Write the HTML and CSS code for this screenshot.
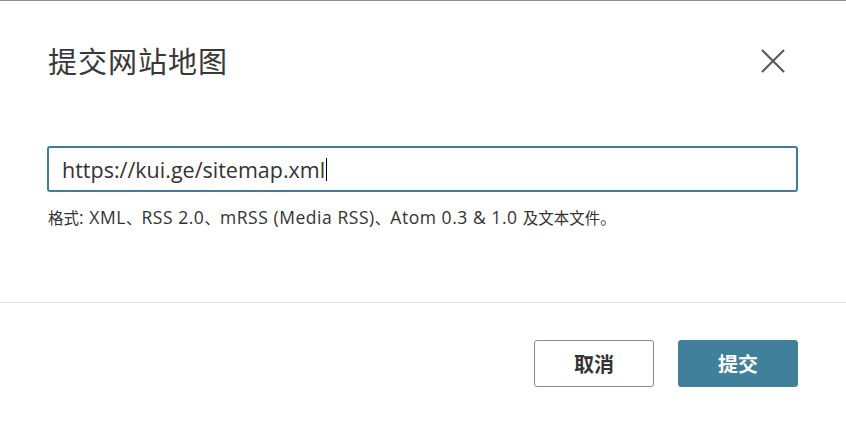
FILE: index.html
```html
<!DOCTYPE html>
<html lang="zh-CN">
<head>
<meta charset="utf-8">
<title>提交网站地图</title>
<link rel="stylesheet" href="styles.css">
</head>
<body>
<div class="dialog">
  <div class="header">
    <h1 class="title">提交网站地图</h1>
    <button class="close" aria-label="关闭">
      <svg width="26" height="26" viewBox="0 0 26 26"><path d="M2 2L24 24M24 2L2 24" stroke="#5a5a5a" stroke-width="2.2" fill="none"/></svg>
    </button>
  </div>
  <div class="body">
    <div class="field" role="textbox"><span class="value">https://kui.ge/sitemap.xml</span><span class="caret"></span></div>
    <p class="hint">格式<span class="latin">: XML</span>、<span class="latin">RSS 2.0</span>、<span class="latin">mRSS (Media RSS)</span>、<span class="latin">Atom 0.3 &amp; 1.0 </span>及文本文件。</p>
  </div>
  <div class="footer">
    <button class="btn btn-secondary">取消</button>
    <button class="btn btn-primary">提交</button>
  </div>
</div>
</body>
</html>
```
FILE: styles.css
```css
* { box-sizing: border-box; }
html, body { margin: 0; padding: 0; background: #fff; }
body {
  font-family: "Open Sans", "Noto Sans CJK SC", sans-serif;
  color: #333;
}
.dialog {
  width: 846px;
  height: 423px;
  border-top: 1px solid #8a8a8a;
  display: flex;
  flex-direction: column;
}
.header {
  height: 120px;
  display: flex;
  align-items: center;
  justify-content: space-between;
  padding: 0 60px 0 48px;
}
.title {
  margin: -3px 0 0;
  font-family: "Noto Sans CJK SC", sans-serif;
  font-weight: 400;
  font-size: 29px;
  letter-spacing: 1px;
  color: #383838;
}
.close {
  border: 0;
  background: none;
  padding: 0;
  width: 26px;
  height: 26px;
  display: flex;
}
.body {
  height: 181px;
  padding: 25px 48px 0 47px;
}
.field {
  height: 46px;
  border: 2px solid #3f7e99;
  border-radius: 3px;
  padding: 0 0 0 13px;
  display: flex;
  align-items: center;
  font-size: 21.5px;
  color: #333;
}
.caret {
  display: inline-block;
  width: 1px;
  height: 23px;
  background: #000;
  margin-left: 1px;
}
.hint {
  margin: 13px 0 0 1px;
  font-family: "Noto Sans CJK SC", sans-serif;
  font-size: 15.5px;
  color: #333;
}
.latin {
  font-family: "Open Sans", sans-serif;
  font-size: 17.5px;
  letter-spacing: 0.55px;
}
.footer {
  flex: 1;
  border-top: 1px solid #e2e2e2;
  display: flex;
  justify-content: flex-end;
  align-items: flex-start;
  gap: 24px;
  padding: 37px 48px 0 0;
}
.btn {
  width: 120px;
  height: 47px;
  border-radius: 3px;
  font-family: "Noto Sans CJK SC", sans-serif;
  font-size: 20px;
  font-weight: 700;
}
.btn-secondary {
  background: #fff;
  border: 1px solid #8a8a8a;
  color: #333;
}
.btn-primary {
  background: #41809b;
  border: 1px solid #41809b;
  color: #fff;
}
```
